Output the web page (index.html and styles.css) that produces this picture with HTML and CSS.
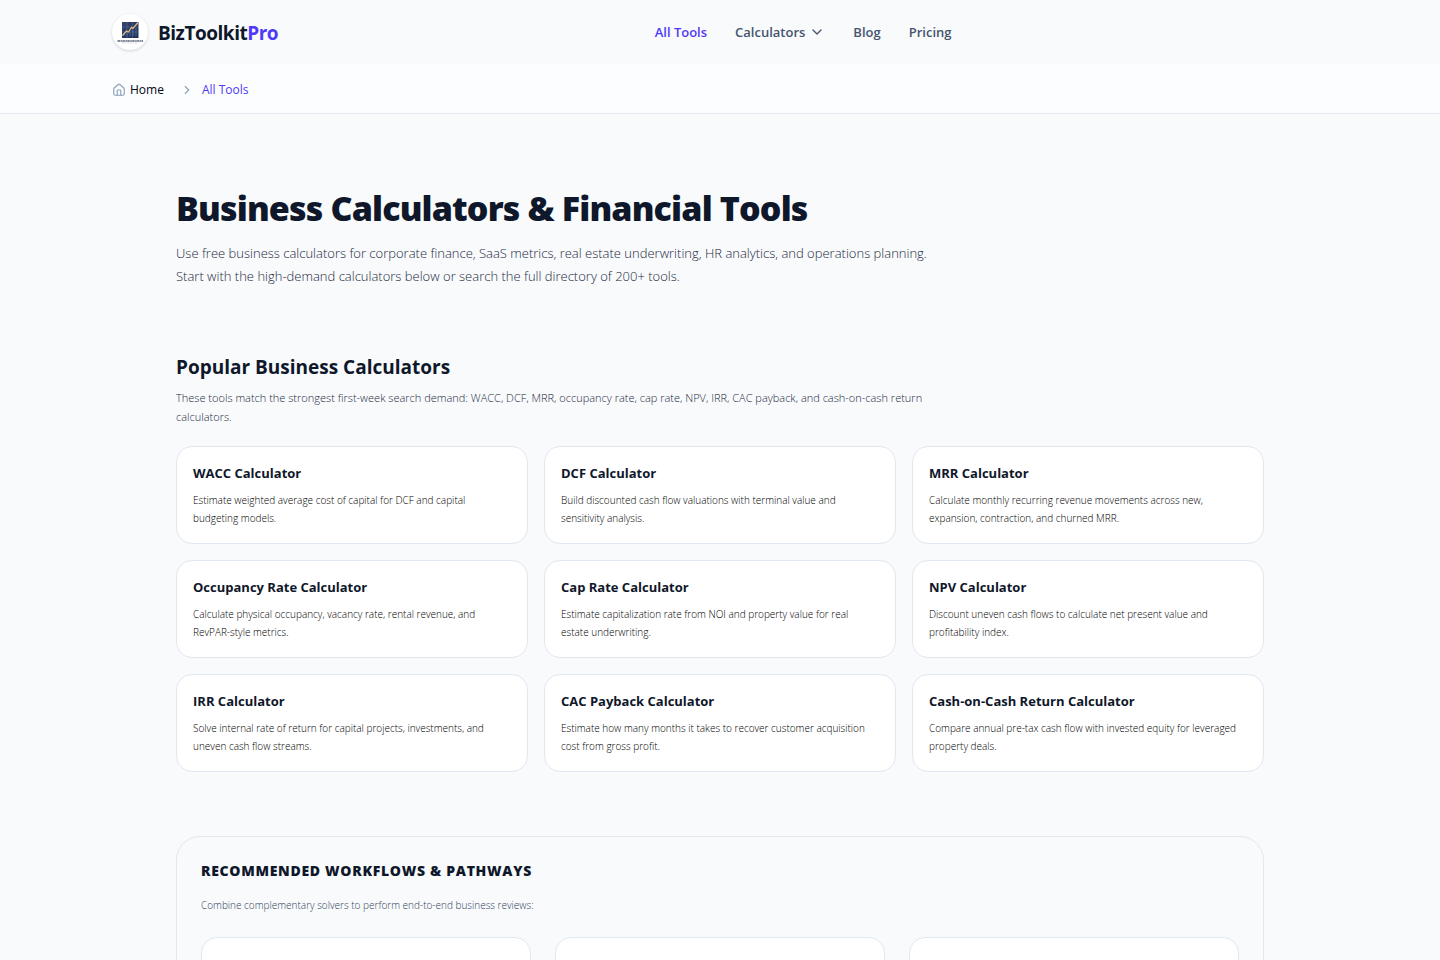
FILE: index.html
```html
<!DOCTYPE html>
<html lang="en">
<head>
<meta charset="utf-8">
<meta name="viewport" content="width=device-width, initial-scale=1">
<title>Business Calculators &amp; Financial Tools | BizToolkitPro</title>
<link rel="stylesheet" href="styles.css">
</head>
<body>
<header class="site-header">
  <div class="wide header-row">
    <a class="brand" href="#">
      <span class="brand-mark">
        <svg width="36" height="36" viewBox="0 0 36 36" aria-hidden="true">
          <defs>
            <linearGradient id="mark" x1="0" y1="0" x2="1" y2="1">
              <stop offset="0" stop-color="#33446e"/>
              <stop offset="1" stop-color="#1d3159"/>
            </linearGradient>
          </defs>
          <rect x="10" y="8" width="16.500" height="16" fill="url(#mark)"/>
          <path d="M10 13h16.500M10 18h16.500M15 8v16M20.500 8v16" stroke="#5c709a" stroke-width=".5"/>
          <path d="M12 22v-3M15 22v-4M18 22v-4M21 22v-6M24 22v-8" stroke="#5878a6" stroke-width="1.200" opacity=".6"/>
          <path d="M10.500 21.500l4-4.500 2 1 3-4.500 1.500 1 5-6" fill="none" stroke="#e0b981" stroke-width="1.300"/>
          <path d="M5.500 27h25.500" stroke="#3d4860" stroke-width="1.500" stroke-dasharray="2.500 .5 1.500 .4" opacity=".85"/>
          <path d="M10 29h16" stroke="#b9bfca" stroke-width=".6" stroke-dasharray="2 .6"/>
        </svg>
      </span>
      <span class="brand-name">BizToolkit<span class="brand-accent">Pro</span></span>
    </a>
    <nav class="main-nav" aria-label="Main">
      <a class="nav-link active" href="#">All Tools</a>
      <button class="nav-link" type="button">Calculators
        <svg width="16" height="16" viewBox="0 0 24 24" fill="none" stroke="currentColor" stroke-width="2" stroke-linecap="round" stroke-linejoin="round" aria-hidden="true"><path d="m6 9 6 6 6-6"/></svg>
      </button>
      <a class="nav-link" href="#">Blog</a>
      <a class="nav-link" href="#">Pricing</a>
    </nav>
    <div class="header-actions"></div>
  </div>
</header>
<nav class="breadcrumb" aria-label="Breadcrumb">
  <ol class="wide crumbs">
    <li><a class="crumb-home" href="#"><svg width="14" height="14" viewBox="0 0 24 24" fill="none" stroke="currentColor" stroke-width="2" stroke-linecap="round" stroke-linejoin="round" aria-hidden="true"><path d="M15 21v-8a1 1 0 0 0-1-1h-4a1 1 0 0 0-1 1v8"/><path d="M3 10a2 2 0 0 1 .709-1.528l7-5.999a2 2 0 0 1 2.582 0l7 5.999A2 2 0 0 1 21 10v9a2 2 0 0 1-2 2H5a2 2 0 0 1-2-2z"/></svg>Home</a></li>
    <li class="crumb-current"><svg width="14" height="14" viewBox="0 0 24 24" fill="none" stroke="currentColor" stroke-width="2" stroke-linecap="round" stroke-linejoin="round" aria-hidden="true"><path d="m9 18 6-6-6-6"/></svg><a href="#" aria-current="page">All Tools</a></li>
  </ol>
</nav>
<main class="content">
  <section class="intro">
    <h1>Business Calculators &amp; Financial Tools</h1>
    <p>Use free business calculators for corporate finance, SaaS metrics, real estate underwriting, HR analytics, and operations planning. Start with the high-demand calculators below or search the full directory of 200+ tools.</p>
  </section>
  <section class="popular">
    <h2>Popular Business Calculators</h2>
    <p class="lead">These tools match the strongest first-week search demand: WACC, DCF, MRR, occupancy rate, cap rate, NPV, IRR, CAC payback, and cash-on-cash return calculators.</p>
    <div class="card-grid">
      <a class="card" href="#"><h3>WACC Calculator</h3><p>Estimate weighted average cost of capital for DCF and capital budgeting models.</p></a>
      <a class="card" href="#"><h3>DCF Calculator</h3><p>Build discounted cash flow valuations with terminal value and sensitivity analysis.</p></a>
      <a class="card" href="#"><h3>MRR Calculator</h3><p>Calculate monthly recurring revenue movements across new, expansion, contraction, and churned MRR.</p></a>
      <a class="card" href="#"><h3>Occupancy Rate Calculator</h3><p>Calculate physical occupancy, vacancy rate, rental revenue, and RevPAR-style metrics.</p></a>
      <a class="card" href="#"><h3>Cap Rate Calculator</h3><p>Estimate capitalization rate from NOI and property value for real estate&nbsp;underwriting.</p></a>
      <a class="card" href="#"><h3>NPV Calculator</h3><p>Discount uneven cash flows to calculate net present value and profitability index.</p></a>
      <a class="card" href="#"><h3>IRR Calculator</h3><p>Solve internal rate of return for capital projects, investments, and uneven cash flow streams.</p></a>
      <a class="card" href="#"><h3>CAC Payback Calculator</h3><p>Estimate how many months it takes to recover customer acquisition cost from gross profit.</p></a>
      <a class="card" href="#"><h3>Cash-on-Cash Return Calculator</h3><p>Compare annual pre-tax cash flow with invested equity for leveraged property deals.</p></a>
    </div>
  </section>
  <section class="workflows">
    <h2>Recommended Workflows &amp; Pathways</h2>
    <p>Combine complementary solvers to perform end-to-end business reviews:</p>
    <div class="pathways">
      <div class="pathway"></div>
      <div class="pathway"></div>
      <div class="pathway"></div>
    </div>
  </section>
</main>
</body>
</html>
```
FILE: styles.css
```css
*,
*::before,
*::after {
  box-sizing: border-box;
}

html {
  scrollbar-width: none;
}

body {
  margin: 0;
  background: #f8fafc;
  color: #0f172a;
  font-family: "Open Sans", "Noto Sans", sans-serif;
  font-weight: 300;
}

h1, h2, h3, p, ol {
  margin: 0;
  padding: 0;
}

a {
  color: inherit;
  text-decoration: none;
}

svg {
  display: block;
  flex: none;
}

.wide {
  max-width: 1280px;
  margin: 0 auto;
  padding: 0 32px;
}

.header-row {
  display: flex;
  align-items: center;
  justify-content: space-between;
  height: 64px;
}

.brand {
  display: flex;
  align-items: center;
  gap: 10px;
}

.brand-mark {
  border-radius: 50%;
  background: #fff;
  box-shadow: 0 1px 3px rgb(15 23 42 / 16%);
}

.brand-name {
  padding-top: 1px;
  font-size: 19px;
  font-weight: 700;
  line-height: 28px;
  letter-spacing: -0.025em;
}

.brand-accent {
  color: #4f39f6;
}

.main-nav {
  display: flex;
  align-items: center;
  gap: 28px;
}

.nav-link {
  display: flex;
  align-items: center;
  gap: 4px;
  padding: 0;
  border: 0;
  background: none;
  color: #45556c;
  font: 600 13px/20px "Open Sans", "Noto Sans", sans-serif;
}

.nav-link.active {
  color: #4f39f6;
}

.breadcrumb {
  background: #fcfdfe;
  border-bottom: 1px solid #e2e8f0;
}

.crumbs {
  display: flex;
  align-items: center;
  gap: 16px;
  height: 49px;
  padding-top: 2px;
  list-style: none;
  font-size: 12px;
  font-weight: 500;
  line-height: 16px;
}

.crumb-home,
.crumb-current {
  display: flex;
  align-items: center;
  gap: 4px;
}

.crumb-home {
  color: #020618;
}

.crumb-current {
  gap: 8px;
  color: #4f39f6;
}

.crumbs svg {
  color: #90a1b9;
}

.content {
  max-width: 1152px;
  margin: 0 auto;
  padding: 72px 32px 64px;
}

.intro {
  max-width: 768px;
}

h1 {
  font-size: 34px;
  font-weight: 800;
  line-height: 44px;
  letter-spacing: -0.025em;
}

.intro p {
  margin-top: 12px;
  color: #1d293d;
  font-size: 13px;
  line-height: 23px;
}

.popular {
  margin-top: 64px;
}

.popular h2 {
  font-size: 19px;
  font-weight: 700;
  line-height: 30px;
}

.lead {
  max-width: 768px;
  margin-top: 6px;
  color: #1d293d;
  font-size: 11px;
  line-height: 19px;
}

.card-grid {
  display: grid;
  grid-template-columns: repeat(3, 1fr);
  gap: 16px;
  margin-top: 20px;
}

.card {
  padding: 16px;
  border: 1px solid #e2e8f0;
  border-radius: 16px;
  background: #fff;
}

.card h3 {
  font-size: 13px;
  font-weight: 700;
  line-height: 20px;
}

.card p {
  margin-top: 8px;
  color: #000;
  font-size: 10px;
  line-height: 18px;
}

.workflows {
  margin-top: 64px;
  padding: 24px;
  border: 1px solid #e2e8f0;
  border-radius: 24px;
}

.workflows h2 {
  font-size: 14px;
  font-weight: 800;
  line-height: 20px;
  letter-spacing: 0.05em;
  text-transform: uppercase;
}

.workflows p {
  margin-top: 16px;
  color: #314158;
  font-size: 10px;
  line-height: 16px;
}

.pathways {
  display: grid;
  grid-template-columns: repeat(3, 1fr);
  gap: 24px;
  margin-top: 24px;
}

.pathway {
  min-height: 160px;
  border: 1px solid #e2e8f0;
  border-radius: 16px;
  background: #fff;
}
```
